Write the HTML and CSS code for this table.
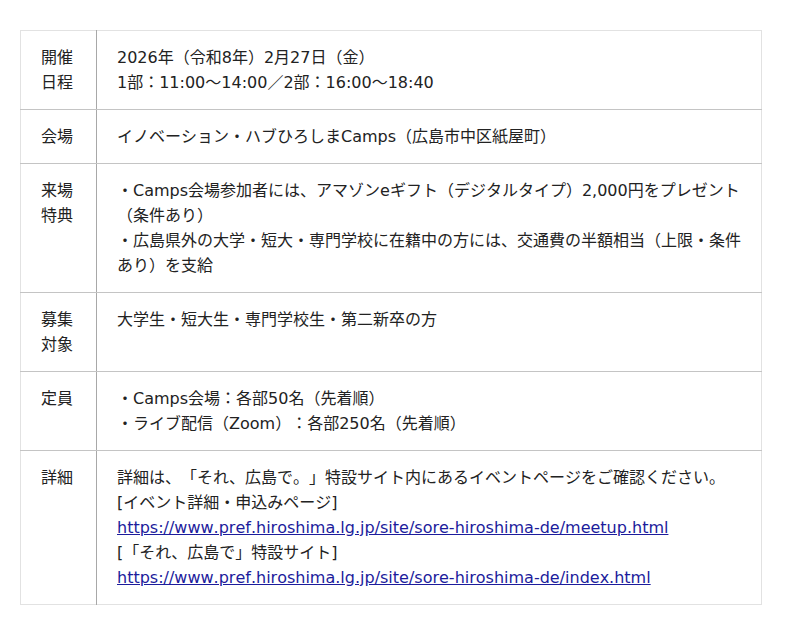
FILE: index.html
```html
<!DOCTYPE html>
<html>
<head>
<meta charset="utf-8">
<title>イベント概要</title>
<link rel="stylesheet" href="styles.css">
</head>
<body>
<div class="page">
<table class="info">
  <tr>
    <th>開催日程</th>
    <td>2026年（令和8年）2月27日（金）<br>1部：11:00〜14:00／2部：16:00〜18:40</td>
  </tr>
  <tr>
    <th>会場</th>
    <td>イノベーション・ハブひろしまCamps（広島市中区紙屋町）</td>
  </tr>
  <tr>
    <th>来場特典</th>
    <td>・Camps会場参加者には、アマゾンeギフト（デジタルタイプ）2,000円をプレゼント（条件あり）<br>・広島県外の大学・短大・専門学校に在籍中の方には、交通費の半額相当（上限・条件あり）を支給</td>
  </tr>
  <tr>
    <th>募集対象</th>
    <td>大学生・短大生・専門学校生・第二新卒の方</td>
  </tr>
  <tr>
    <th>定員</th>
    <td>・Camps会場：各部50名（先着順）<br>・ライブ配信（Zoom）：各部250名（先着順）</td>
  </tr>
  <tr>
    <th>詳細</th>
    <td>詳細は、「それ、広島で。」特設サイト内にあるイベントページをご確認ください。<br>[イベント詳細・申込みページ]<br><a href="#">https://www.pref.hiroshima.lg.jp/site/sore-hiroshima-de/meetup.html</a><br>[「それ、広島で」特設サイト]<br><a href="#">https://www.pref.hiroshima.lg.jp/site/sore-hiroshima-de/index.html</a></td>
  </tr>
</table>
</div>
</body>
</html>
```
FILE: styles.css
```css
html, body {
  margin: 0;
  padding: 0;
  background: #fff;
}
.page {
  padding: 30px 20px;
  font-family: "DejaVu Sans", "Noto Sans CJK JP", sans-serif;
  font-size: 16px;
  line-height: 25px;
  color: #222;
  text-spacing-trim: space-all;
  font-kerning: none;
}
.info {
  width: 742px;
  border-collapse: collapse;
  border: 1px solid #e2e2e2;
}
.info th,
.info td {
  vertical-align: top;
  text-align: left;
  font-weight: normal;
  padding: 14px 20px;
  border-bottom: 1px solid #c4c4c4;
}
.info tr:last-child th,
.info tr:last-child td {
  border-bottom: none;
}
.info th {
  width: 32px;
  padding-left: 20px;
  padding-right: 23px;
  border-right: 1px solid #a8a8a8;
}
.info td {
  padding-left: 20px;
  padding-right: 20px;
}
.info a {
  color: #1c1c9c;
  text-decoration: underline;
}
```
